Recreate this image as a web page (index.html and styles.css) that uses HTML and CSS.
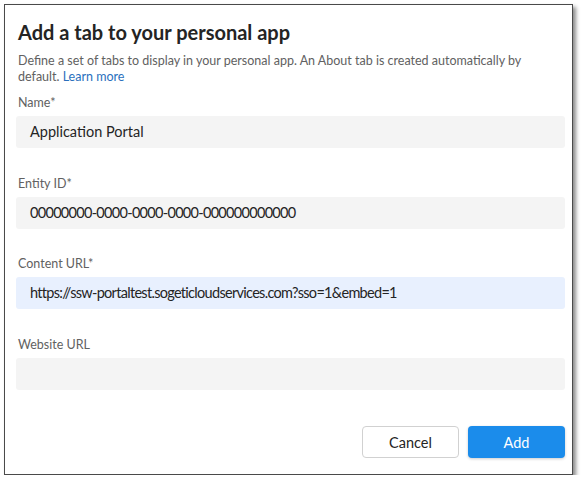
FILE: index.html
```html
<!DOCTYPE html>
<html>
<head>
<meta charset="utf-8">
<link rel="stylesheet" href="styles.css">
</head>
<body>
<div class="dialog">
  <h1 class="title">Add a tab to your personal app</h1>
  <p class="desc">Define a set of tabs to display in your personal app. An About tab is created automatically by default. <a class="link" href="#">Learn more</a></p>
  <div class="field first">
    <div class="label">Name*</div>
    <div class="input">Application Portal</div>
  </div>
  <div class="field">
    <div class="label">Entity ID*</div>
    <div class="input tight">00000000-0000-0000-0000-000000000000</div>
  </div>
  <div class="field">
    <div class="label">Content URL*</div>
    <div class="input tight autofill">https://ssw-portaltest.sogeticloudservices.com?sso=1&amp;embed=1</div>
  </div>
  <div class="field">
    <div class="label">Website URL</div>
    <div class="input"></div>
  </div>
  <div class="actions">
    <button class="btn cancel">Cancel</button>
    <button class="btn primary">Add</button>
  </div>
</div>
</body>
</html>
```
FILE: styles.css
```css
html, body {
  margin: 0;
  padding: 0;
  background: #ffffff;
}
body {
  font-family: "Segoe UI", Lato, "Open Sans", sans-serif;
  color: #242424;
}
.dialog {
  box-sizing: border-box;
  margin: 4px 0 0 4px;
  width: 569px;
  height: 471px;
  border: 1.5px solid #4a4a4a;
  box-shadow: 3px 3px 4px rgba(0, 0, 0, 0.45);
  padding: 14px 7px 16px 11px;
  display: flex;
  flex-direction: column;
}
.title {
  margin: 0 0 0 2px;
  font-size: 20px;
  font-weight: 700;
  line-height: 26px;
  color: #242424;
}
.desc {
  margin: 8px 0 0 2px;
  font-size: 12.5px;
  line-height: 16px;
  color: #616161;
}
.link {
  color: #2a6fbd;
  text-decoration: none;
}
.field {
  display: flex;
  flex-direction: column;
  gap: 4px;
  margin-top: 26.5px;
}
.field.first {
  margin-top: 9px;
}
.label {
  font-size: 12.5px;
  line-height: 18px;
  color: #616161;
  margin-left: 2px;
}
.input {
  height: 32px;
  box-sizing: border-box;
  background: #f4f4f4;
  border-radius: 3px;
  padding: 0 14px;
  font-size: 14.5px;
  line-height: 32px;
  color: #242424;
}
.input.tight {
  letter-spacing: -0.7px;
}
.input.autofill {
  background: #e8f0fe;
}
.actions {
  margin-top: auto;
  display: flex;
  justify-content: flex-end;
  gap: 9px;
}
.btn {
  width: 97px;
  height: 32px;
  border-radius: 4px;
  font-family: inherit;
  font-size: 14.5px;
  cursor: pointer;
}
.cancel {
  background: #ffffff;
  border: 1px solid #d1d1d1;
  color: #242424;
}
.primary {
  background: #1b8ceb;
  border: none;
  color: #ffffff;
  box-shadow: 0 1px 3px rgba(0, 0, 0, 0.2);
}
```
